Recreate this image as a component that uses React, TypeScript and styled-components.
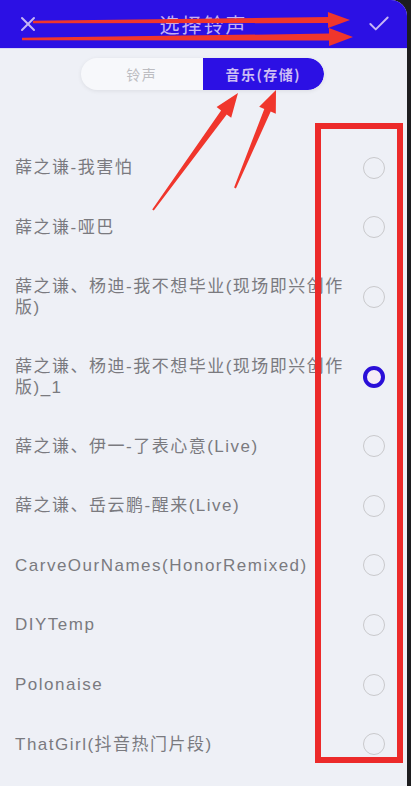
import React from 'react'
import styled, { createGlobalStyle } from 'styled-components'
import { X, Check } from 'lucide-react'

const GlobalStyle = createGlobalStyle`
  html, body {
    margin: 0;
    padding: 0;
    background: #1d1d1f;
  }
  body {
    font-family: "Noto Sans CJK SC", "Noto Sans", sans-serif;
  }
`

const Page = styled.div`
  position: relative;
  width: 411px;
  height: 786px;
  overflow: hidden;
`

const Screen = styled.div`
  width: 407px;
  height: 786px;
  background: #eef0f6;
  border-top-right-radius: 16px;
  overflow: hidden;
`

const Header = styled.header`
  height: 48px;
  background: #2c10e4;
  display: grid;
  grid-template-columns: 56px 1fr 56px;
  align-items: center;
  border-bottom: 1px solid #d9d6f4;
`

const HeaderButton = styled.button`
  display: flex;
  align-items: center;
  justify-content: center;
  border: 0;
  padding: 0;
  background: transparent;
  color: #c7b6f5;
  height: 48px;
`

const Title = styled.h1`
  margin: 0;
  text-align: center;
  font-size: 20px;
  font-weight: 400;
  letter-spacing: 2px;
  color: #c4b2f2;
`

const SegmentBar = styled.div`
  display: flex;
  justify-content: center;
  padding: 9px 2px 0 0;
`

const Segments = styled.div`
  display: flex;
  width: 243px;
  height: 32px;
  border-radius: 16px;
  background: #f7f8fb;
  box-shadow: 0 1px 4px rgba(0, 0, 0, 0.08);
  overflow: hidden;
`

const Segment = styled.div<{ $active?: boolean }>`
  flex: 1;
  display: flex;
  align-items: center;
  justify-content: center;
  font-size: 14px;
  letter-spacing: 1.5px;
  font-weight: ${p => (p.$active ? 600 : 400)};
  color: ${p => (p.$active ? '#cdbdf4' : '#bdbdc2')};
  background: ${p => (p.$active ? '#2c10e4' : 'transparent')};
  border-radius: ${p => (p.$active ? '0 16px 16px 0' : '16px 0 0 16px')};
`

const List = styled.ul`
  list-style: none;
  margin: 0;
  padding: 48px 0 0;
`

const Row = styled.li`
  display: flex;
  align-items: center;
  gap: 12px;
  padding: 18.8px 22px 18.8px 15px;
`

const SongName = styled.span`
  flex: 1;
  font-family: "Liberation Sans", "Noto Sans CJK SC", sans-serif;
  font-size: 17px;
  line-height: 21px;
  letter-spacing: 1.5px;
  color: #7a7a7f;
  word-break: break-all;
`

const Radio = styled.span<{ $checked?: boolean }>`
  flex: none;
  box-sizing: border-box;
  width: 22px;
  height: 22px;
  border-radius: 50%;
  border: ${p => (p.$checked ? '4.5px solid #2a0fd8' : '1.5px solid #c9c9cc')};
  background: ${p => (p.$checked ? '#f6ecf6' : 'transparent')};
`

const Markup = styled.svg`
  position: absolute;
  top: 0;
  left: 0;
  pointer-events: none;
`

const songs = [
  '薛之谦-我害怕',
  '薛之谦-哑巴',
  '薛之谦、杨迪-我不想毕业(现场即兴创作版)',
  '薛之谦、杨迪-我不想毕业(现场即兴创作版)_1',
  '薛之谦、伊一-了表心意(Live)',
  '薛之谦、岳云鹏-醒来(Live)',
  'CarveOurNames(HonorRemixed)',
  'DIYTemp',
  'Polonaise',
  'ThatGirl(抖音热门片段)',
]

const selectedIndex = 3

// tapered marker arrow: thin at the tail, widening into a pointed head
const arrowPoints = (
  x1: number,
  y1: number,
  x2: number,
  y2: number,
  headLen = 22,
  headHalf = 9,
  tail = 1,
  neck = 3
) => {
  const dx = x2 - x1
  const dy = y2 - y1
  const len = Math.hypot(dx, dy)
  const ux = dx / len
  const uy = dy / len
  const nx = -uy
  const ny = ux
  const bx = x2 - ux * headLen
  const by = y2 - uy * headLen
  const pts = [
    [x1 + nx * tail, y1 + ny * tail],
    [bx + nx * neck, by + ny * neck],
    [bx + nx * headHalf, by + ny * headHalf],
    [x2, y2],
    [bx - nx * headHalf, by - ny * headHalf],
    [bx - nx * neck, by - ny * neck],
    [x1 - nx * tail, y1 - ny * tail],
  ]
  return pts.map(([x, y]) => `${x.toFixed(1)},${y.toFixed(1)}`).join(' ')
}

const App: React.FC = () => {
  return (
    <Page>
      <GlobalStyle />
      <Screen>
        <Header>
          <HeaderButton aria-label="close">
            <X size={24} strokeWidth={2} />
          </HeaderButton>
          <Title>选择铃声</Title>
          <HeaderButton aria-label="confirm">
            <Check size={26} strokeWidth={1.8} />
          </HeaderButton>
        </Header>

        <SegmentBar>
          <Segments>
            <Segment>铃声</Segment>
            <Segment $active>音乐(存储)</Segment>
          </Segments>
        </SegmentBar>

        <List>
          {songs.map((_song, i) => (
            <Row key={i}>
              <SongName>{_song}</SongName>
              <Radio $checked={i === selectedIndex} />
            </Row>
          ))}
        </List>
      </Screen>

      <Markup width={411} height={786} viewBox="0 0 411 786">
        <g fill="#f0362c">
          <polygon points={arrowPoints(33, 22, 350, 20, 22, 8, 1.2, 3)} />
          <polygon points={arrowPoints(22, 39, 353, 37, 24, 9, 1.2, 3.5)} />
          <polygon points={arrowPoints(153, 210, 238, 93, 24, 9, 1, 3.5)} />
          <polygon points={arrowPoints(235, 188, 276, 90, 22, 9, 1, 3.5)} />
        </g>
        <rect x={318} y={126} width={82} height={634} fill="none" stroke="#ec2a2a" strokeWidth={6} />
      </Markup>
    </Page>
  )
}

export default App
